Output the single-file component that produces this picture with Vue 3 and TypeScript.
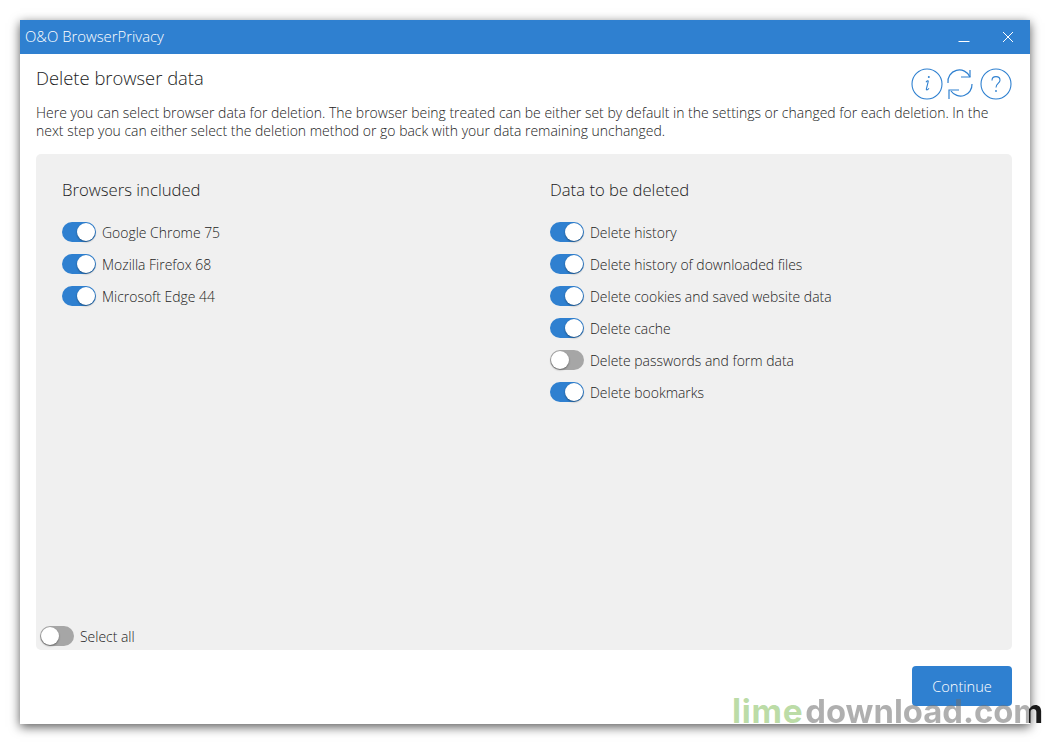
<script setup lang="ts">
const browsers = [
  { label: "Google Chrome 75", on: true },
  { label: "Mozilla Firefox 68", on: true },
  { label: "Microsoft Edge 44", on: true },
];
const dataItems = [
  { label: "Delete history", on: true },
  { label: "Delete history of downloaded files", on: true },
  { label: "Delete cookies and saved website data", on: true },
  { label: "Delete cache", on: true },
  { label: "Delete passwords and form data", on: false },
  { label: "Delete bookmarks", on: true },
];
</script>

<template>
  <div class="page">
    <div class="window">
      <header class="titlebar">
        <span class="app-name">O&amp;O BrowserPrivacy</span>
        <div class="win-btns">
          <svg width="12" height="12" viewBox="0 0 12 12"><path d="M0.5 10.5H11.5" stroke="#fff" fill="none" /></svg>
          <svg width="12" height="12" viewBox="0 0 12 12"><path d="M1 1L11 11M11 1L1 11" stroke="#fff" fill="none" /></svg>
        </div>
      </header>

      <main class="content">
        <div class="head">
          <h1>Delete browser data</h1>
          <div class="tools">
            <svg width="32" height="32" viewBox="0 0 32 32">
              <circle cx="16" cy="16" r="15" fill="none" stroke="#2f80d0" stroke-width="1.1" />
              <path d="M15 14.2C16 12.8 17.6 12 17.2 13.6L15.4 20.8C15 22.6 16.6 22 18 20.4" fill="none" stroke="#2f80d0" stroke-width="1.1" />
              <circle cx="17.8" cy="9" r="1" fill="#2f80d0" />
            </svg>
            <svg width="28" height="32" viewBox="0 0 28 32">
              <path d="M3 15A11.5 11.5 0 0 1 25 9" fill="none" stroke="#2f80d0" stroke-width="1.2" />
              <path d="M25 2V9H16" fill="none" stroke="#2f80d0" stroke-width="1.2" />
              <path d="M27 16A11.5 11.5 0 0 1 6 23" fill="none" stroke="#2f80d0" stroke-width="1.2" />
              <path d="M4 31V22H14" fill="none" stroke="#2f80d0" stroke-width="1.2" />
            </svg>
            <svg class="help" width="32" height="32" viewBox="0 0 32 32">
              <circle cx="16" cy="16" r="15" fill="none" stroke="#2f80d0" stroke-width="1.1" />
              <path d="M12 12.4C12 9.8 14 8.6 16 8.6C18.2 8.6 20 10 20 12.2C20 15.4 16 15.6 16 19.4" fill="none" stroke="#2f80d0" stroke-width="1.1" />
              <circle cx="16" cy="23" r="0.9" fill="#2f80d0" />
            </svg>
          </div>
        </div>
        <p class="intro">
          Here you can select browser data for deletion. The browser being treated can be either set by default in the settings or changed for each deletion. In the next step you can either select the deletion method or go back with your data remaining unchanged.
        </p>

        <section class="panel">
          <div class="columns">
            <div class="col">
              <h2>Browsers included</h2>
              <div class="rows">
                <label v-for="b in browsers" :key="b.label" class="row">
                  <span class="toggle" :class="{ on: b.on }"><span class="knob"></span></span>
                  <span>{{ b.label }}</span>
                </label>
              </div>
            </div>
            <div class="col">
              <h2>Data to be deleted</h2>
              <div class="rows">
                <label v-for="d in dataItems" :key="d.label" class="row">
                  <span class="toggle" :class="{ on: d.on }"><span class="knob"></span></span>
                  <span>{{ d.label }}</span>
                </label>
              </div>
            </div>
          </div>
          <label class="row select-all">
            <span class="toggle"><span class="knob"></span></span>
            <span>Select all</span>
          </label>
        </section>

        <footer class="actions">
          <button class="continue" type="button">Continue</button>
        </footer>
      </main>
    </div>

    <div class="watermark"><span class="lime">lime</span><span class="dl">download.com</span></div>
  </div>
</template>

<style scoped>
.page {
  position: relative;
  width: 1050px;
  height: 744px;
  padding: 20px;
  box-sizing: border-box;
  overflow: hidden;
  background: #fff;
  font-family: "Open Sans", "Liberation Sans", sans-serif;
  color: #1c1c1c;
}
.window {
  height: 704px;
  display: flex;
  flex-direction: column;
  background: #fff;
  box-shadow: 0 3px 10px rgba(0, 0, 0, 0.65);
}
.titlebar {
  height: 34px;
  flex: none;
  display: flex;
  align-items: center;
  justify-content: space-between;
  padding: 0 16px 0 5px;
  background: #2f80d0;
  color: #fff;
  font-size: 14.85px;
  font-weight: 300;
}
.app-name {
  position: relative;
  top: -1px;
}
.win-btns {
  display: flex;
  gap: 32px;
}
.content {
  flex: 1;
  display: flex;
  flex-direction: column;
  padding: 14px 18px 18px 16px;
  min-height: 0;
}
.head {
  display: flex;
  justify-content: space-between;
  align-items: flex-start;
  height: 32px;
}
h1 {
  margin: -2px 0 0;
  font-size: 18.4px;
  font-weight: 300;
  line-height: 24px;
}
.tools {
  display: flex;
  gap: 2px;
}
.help {
  margin-left: 5px;
}
.intro {
  margin: 4px 0 14px;
  font-size: 13.98px;
  font-weight: 300;
  line-height: 18px;
}
.panel {
  flex: 1;
  display: flex;
  flex-direction: column;
  justify-content: space-between;
  background: #f0f0f0;
  border-radius: 5px;
  padding: 24px 26px 4px 4px;
}
.columns {
  display: grid;
  grid-template-columns: 488px 1fr;
  padding-left: 22px;
}
h2 {
  margin: 0 0 20px;
  font-size: 16.7px;
  font-weight: 300;
  line-height: 23px;
}
.rows {
  display: flex;
  flex-direction: column;
  gap: 12px;
  padding-top: 1px;
}
.row {
  display: flex;
  align-items: center;
  gap: 6px;
  height: 20px;
  font-size: 13.95px;
  font-weight: 300;
}
.row > span:last-child {
  position: relative;
  top: 0;
}
.toggle {
  width: 34px;
  height: 20px;
  flex: none;
  display: flex;
  justify-content: flex-start;
  align-items: center;
  box-sizing: border-box;
  padding: 1px;
  border-radius: 10px;
  background: #a6a6a6;
}
.toggle.on {
  justify-content: flex-end;
  background: #2f80d0;
}
.knob {
  width: 18px;
  height: 18px;
  border-radius: 50%;
  background: #fff;
  box-shadow: 0 1px 2px rgba(0, 0, 0, 0.4);
}
.actions {
  display: flex;
  justify-content: flex-end;
  padding-top: 16px;
}
.continue {
  width: 100px;
  height: 40px;
  border: none;
  border-radius: 4px;
  background: #2f80d0;
  color: #fff;
  font-family: inherit;
  font-size: 14.6px;
  font-weight: 300;
}
.watermark {
  position: absolute;
  left: 732px;
  top: 690px;
  font-family: "Inter", "Liberation Sans", sans-serif;
  font-size: 33.4px;
  font-weight: 700;
  line-height: 42px;
  white-space: nowrap;
}
.lime {
  color: rgba(130, 190, 90, 0.55);
  letter-spacing: 0.7px;
}
/* the last letter runs past the window edge at x=1030, where it turns solid */
.dl {
  margin-left: 2px;
  font-size: 32.8px;
  background: linear-gradient(90deg, rgba(110, 110, 110, 0.55) 224px, #1a1a1a 224px);
  -webkit-background-clip: text;
  background-clip: text;
  color: transparent;
}
</style>

<style>
html,
body {
  margin: 0;
  background: #fff;
}
</style>
